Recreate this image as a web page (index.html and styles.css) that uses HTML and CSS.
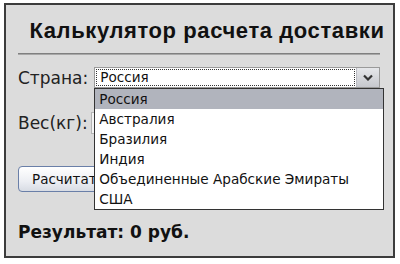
FILE: index.html
```html
<!DOCTYPE html>
<html lang="ru">
<head>
<meta charset="utf-8">
<title>Калькулятор расчета доставки</title>
<link rel="stylesheet" href="styles.css">
</head>
<body>
<div class="calc">
  <h1 class="calc-title">Калькулятор расчета доставки</h1>
  <hr class="calc-rule">
  <div class="row row-country">
    <span class="label">Страна:</span>
    <div class="select">
      <div class="select-value">Россия</div>
      <div class="select-btn">
        <svg width="10" height="7" viewBox="0 0 10 7"><path d="M1 1.5 L5 5.5 L9 1.5" fill="none" stroke="#333" stroke-width="2.2"/></svg>
      </div>
      <ul class="select-list">
        <li class="opt opt-active">Россия</li>
        <li class="opt">Австралия</li>
        <li class="opt">Бразилия</li>
        <li class="opt">Индия</li>
        <li class="opt">Объединенные Арабские Эмираты</li>
        <li class="opt">США</li>
      </ul>
    </div>
  </div>
  <div class="row row-weight">
    <span class="label">Вес(кг):</span>
    <input class="weight" type="text">
  </div>
  <div class="row row-btn">
    <button class="calc-btn">Расчитать</button>
  </div>
  <p class="result">Результат: 0 руб.</p>
</div>
</body>
</html>
```

FILE: styles.css
```css
html, body {
  margin: 0;
  padding: 0;
  background: #ffffff;
}
body {
  padding: 3px 5px 0 4px;
  font-family: "DejaVu Sans", Verdana, sans-serif;
  color: #111;
}
.calc {
  box-sizing: border-box;
  height: 255px;
  border: 2px solid #3c3c3c;
  background: #dcdcdc;
  padding: 0 13px 0 12px;
}
.calc-title {
  margin: 0 -16px 0 0;
  padding: 13px 0 0 0;
  font-family: "Liberation Sans", Arial, sans-serif;
  font-size: 22px;
  line-height: 26px;
  letter-spacing: 0.6px;
  font-weight: bold;
  text-align: center;
  white-space: nowrap;
  color: #111;
}
.calc-rule {
  margin: 9px 0 0 0;
  border: 0;
  border-top: 1px solid #808080;
  border-bottom: 1px solid #a8a8a8;
  height: 0;
}
.row {
  display: flex;
  align-items: center;
}
.label {
  font-size: 17px;
  color: #222;
}
.row-country {
  margin-top: 12px;
}
.select {
  position: relative;
  margin-left: 6px;
  width: 286px;
  height: 21px;
  box-sizing: border-box;
  background: #fff;
  border: 1px solid #9a9a9a;
  display: flex;
}
.select-value {
  flex: 1;
  margin: 1px;
  border: 1px dotted #333;
  font-size: 13.6px;
  line-height: 15px;
  padding-left: 3px;
}
.select-btn {
  width: 22px;
  background: linear-gradient(#e6e7ea, #c6c8ce);
  border-left: 1px solid #b9bbc2;
  display: flex;
  align-items: center;
  justify-content: center;
}
.select-list {
  position: absolute;
  left: -1px;
  top: 20px;
  width: 288px;
  margin: 0;
  padding: 0;
  list-style: none;
  background: #fff;
  border: 1px solid #333;
  z-index: 2;
}
.opt {
  height: 20px;
  line-height: 20px;
  font-size: 13.6px;
  padding-left: 4px;
  color: #111;
}
.opt-active {
  background: #b1b4bd;
}
.row-weight {
  margin-top: 24px;
}
.weight {
  margin-left: 3px;
  width: 120px;
  height: 22px;
  box-sizing: border-box;
  border: 1px solid #b5b5b5;
  background: #f4f4f4;
}
.row-btn {
  margin-top: 32px;
}
.calc-btn {
  height: 26px;
  padding: 0 13px;
  font-family: "DejaVu Sans", Verdana, sans-serif;
  font-size: 13.5px;
  color: #111;
  border: 1px solid #6a7fa8;
  border-radius: 4px;
  background: linear-gradient(#ffffff, #eceef3 60%, #d8dce4);
}
.result {
  margin: 30px 0 0 0;
  font-size: 17px;
  font-weight: bold;
  color: #111;
}
```
